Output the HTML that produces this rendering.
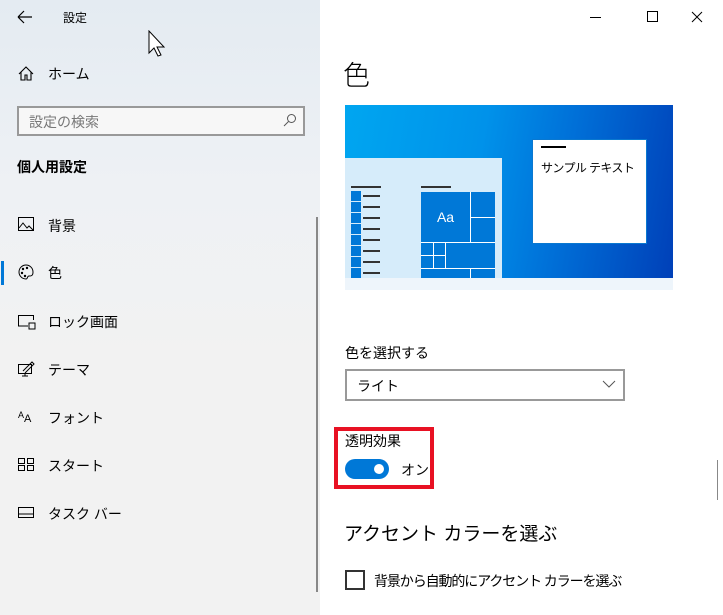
<!DOCTYPE html>
<html><head><meta charset="utf-8"><style>
*{margin:0;padding:0;box-sizing:border-box}
body{width:723px;height:615px;overflow:hidden;font-family:"Liberation Sans","Noto Sans CJK JP",sans-serif;color:#000;position:relative;background:#fff}
.left{position:absolute;left:0;top:0;width:320px;height:615px;background:linear-gradient(180deg,#e4ebf2 0%,#eef1f4 30%,#f2f2f2 60%,#f2f2f2 100%)}
.t{position:absolute;white-space:nowrap}
.nav{position:absolute;left:48px;font-size:14px}
.ic{position:absolute;left:18px}
.right{position:absolute;left:320px;top:0;width:403px;height:615px;background:#fff}
</style></head><body>
<div style="position:absolute;left:0;top:0;width:60px;height:2px;background:#1e4f80"></div>
<div style="position:absolute;left:60px;top:0;width:663px;height:1px;background:#777"></div>
<div class="left">
 <svg class="ic" style="left:17px;top:10px" width="16" height="14"><path d="M1 7h14M1 7l6-6M1 7l6 6" stroke="#000" stroke-width="1.2" fill="none"/></svg>
 <div class="t" style="left:63px;top:9px;font-size:12px">設定</div>
 <svg style="position:absolute;left:148px;top:30px" width="20" height="30"><path d="M1 1v22l5-5 4 8 3-1-4-8h7z" fill="#fff" stroke="#000"/></svg>
 <svg class="ic" style="top:66px" width="16" height="16"><path d="M1 8L8 1l7 7M3 6v8h4v-5h2v5h4V6" stroke="#000" stroke-width="1.1" fill="none"/></svg>
 <div class="nav" style="top:64px">ホーム</div>
 <div style="position:absolute;left:17px;top:106px;width:288px;height:30px;border:2px solid #999;background:#f7f7f7"></div>
 <div class="t" style="left:29px;top:112px;font-size:14px;color:#777">設定の検索</div>
 <svg style="position:absolute;left:283px;top:113px" width="14" height="14"><circle cx="8.5" cy="5.5" r="4" stroke="#555" fill="none"/><path d="M5.5 8.5L1 13" stroke="#555"/></svg>
 <div class="t" style="left:17px;top:157px;font-size:14px;font-weight:bold">個人用設定</div>
 <svg class="ic" style="top:217px" width="17" height="15"><rect x="0.5" y="0.5" width="15" height="13" stroke="#000" fill="none"/><path d="M1 11l4-5 4 5 2-2 4 4" stroke="#000" fill="none"/></svg>
 <div class="nav" style="top:216px">背景</div>
 <div style="position:absolute;left:1px;top:261px;width:3px;height:24px;background:#0078d7"></div>
 <svg class="ic" style="top:264px" width="16" height="16"><path d="M8 1a7 7 0 1 0 0 14c2 0 1-3 3-3s4 0 4-4A7 7 0 0 0 8 1z" stroke="#000" fill="none"/><circle cx="5" cy="5" r="1.2"/><circle cx="9" cy="4" r="1.2"/><circle cx="4" cy="9" r="1.2"/><circle cx="7" cy="12" r="1.2"/></svg>
 <div class="nav" style="top:263px">色</div>
 <svg class="ic" style="top:315px" width="18" height="15"><path d="M10 11H0.5V0.5h15V5" stroke="#000" fill="none"/><rect x="11" y="8" width="6" height="6" stroke="#000" fill="none"/></svg>
 <div class="nav" style="top:312px">ロック画面</div>
 <svg class="ic" style="top:361px" width="17" height="16"><rect x="0.5" y="3.5" width="13" height="9" stroke="#000" fill="none"/><path d="M7 12v3M4 15h6M5 10l9-9 2 2-9 9" stroke="#000" fill="none"/></svg>
 <div class="nav" style="top:360px">テーマ</div>
 <div class="t" style="left:18px;top:410px;font-size:11px"><span style="font-size:9px;vertical-align:4px">A</span>A</div>
 <div class="nav" style="top:408px">フォント</div>
 <svg class="ic" style="top:458px" width="17" height="14"><rect x="0.5" y="0.5" width="6" height="5" stroke="#000" fill="none"/><rect x="9.5" y="0.5" width="6" height="5" stroke="#000" fill="none"/><rect x="0.5" y="7.5" width="6" height="5" stroke="#000" fill="none"/><rect x="9.5" y="7.5" width="6" height="5" stroke="#000" fill="none"/></svg>
 <div class="nav" style="top:456px">スタート</div>
 <svg class="ic" style="top:507px" width="17" height="12"><rect x="0.5" y="0.5" width="15" height="10" stroke="#000" fill="none"/><path d="M1 7h15" stroke="#000"/></svg>
 <div class="nav" style="top:504px">タスク バー</div>
 <div style="position:absolute;left:316px;top:217px;width:2px;height:375px;background:#888"></div>
</div>
<div class="right">
 <div style="position:absolute;left:270px;top:17px;width:11px;height:1px;background:#000"></div>
 <div style="position:absolute;left:327px;top:11px;width:11px;height:11px;border:1px solid #000"></div>
 <svg style="position:absolute;left:371px;top:11px" width="12" height="12"><path d="M1 1l10 10M11 1L1 11" stroke="#000"/></svg>
 <div class="t" style="left:23px;top:54px;font-size:27px;font-weight:300">色</div>
 <div style="position:absolute;left:25px;top:105px;width:328px;height:173px;background:linear-gradient(100deg,#00a6f0 0%,#0092ea 40%,#0070d8 65%,#0040b8 100%)"></div>
 <div style="position:absolute;left:25px;top:278px;width:328px;height:12px;background:#eef5fb"></div>
 <div style="position:absolute;left:25px;top:158px;width:157px;height:120px;background:#d6ecfa"></div>
 <div style="position:absolute;left:31px;top:186px;width:30px;height:2px;background:#333"></div>
 <div style="position:absolute;left:101px;top:186px;width:30px;height:2px;background:#333"></div>
 <div style="position:absolute;left:31px;top:191px;width:10px;height:87px;background:repeating-linear-gradient(180deg,#0078d7 0 10px,#d6ecfa 10px 11px)"></div>
 <div style="position:absolute;left:43px;top:195px;width:17px;height:80px;background:repeating-linear-gradient(180deg,#333 0 2px,transparent 2px 11px)"></div>
 <div style="position:absolute;left:101px;top:192px;width:74px;height:86px;background:#fff"></div>
 <div style="position:absolute;left:101px;top:192px;width:49px;height:50px;background:#0078d7;color:#fff;font-size:14px;text-align:center;line-height:50px">Aa</div>
 <div style="position:absolute;left:151px;top:192px;width:24px;height:25px;background:#0078d7"></div>
 <div style="position:absolute;left:151px;top:218px;width:24px;height:24px;background:#0078d7"></div>
 <div style="position:absolute;left:101px;top:243px;width:12px;height:12px;background:#0078d7"></div>
 <div style="position:absolute;left:114px;top:243px;width:11px;height:12px;background:#0078d7"></div>
 <div style="position:absolute;left:101px;top:256px;width:12px;height:12px;background:#0078d7"></div>
 <div style="position:absolute;left:114px;top:256px;width:11px;height:12px;background:#0078d7"></div>
 <div style="position:absolute;left:126px;top:243px;width:49px;height:25px;background:#0078d7"></div>
 <div style="position:absolute;left:101px;top:269px;width:49px;height:9px;background:#0078d7"></div>
 <div style="position:absolute;left:151px;top:269px;width:24px;height:9px;background:#0078d7"></div>
 <div style="position:absolute;left:212px;top:139px;width:115px;height:105px;background:#fff;border:1px solid #0a78d0"></div>
 <div style="position:absolute;left:221px;top:146px;width:25px;height:2px;background:#000"></div>
 <div class="t" style="left:221px;top:159px;font-size:12px;letter-spacing:-0.6px">サンプル テキスト</div>
 <div class="t" style="left:25px;top:343px;font-size:14px">色を選択する</div>
 <div style="position:absolute;left:25px;top:369px;width:280px;height:32px;border:2px solid #999"></div>
 <div class="t" style="left:37px;top:376px;font-size:14px">ライト</div>
 <svg style="position:absolute;left:282px;top:380px" width="14" height="8"><path d="M1 1l6 6 6-6" stroke="#555" fill="none"/></svg>
 <div style="position:absolute;left:14px;top:427px;width:100px;height:62px;border:4px solid #e81123"></div>
 <div class="t" style="left:25px;top:431px;font-size:14px">透明効果</div>
 <div style="position:absolute;left:25px;top:459px;width:44px;height:20px;border-radius:10px;background:#0078d7"></div>
 <div style="position:absolute;left:54px;top:464px;width:10px;height:10px;border-radius:5px;background:#fff"></div>
 <div class="t" style="left:81px;top:460px;font-size:14px">オン</div>
 <div class="t" style="left:24px;top:519px;font-size:19px">アクセント カラーを選ぶ</div>
 <div style="position:absolute;left:25px;top:570px;width:20px;height:20px;border:2px solid #333"></div>
 <div class="t" style="left:54px;top:571px;font-size:14px;letter-spacing:-1.1px">背景から自動的にアクセント カラーを選ぶ</div>
 <div style="position:absolute;left:397px;top:460px;width:1px;height:40px;background:#888"></div>
</div>
</body></html>
